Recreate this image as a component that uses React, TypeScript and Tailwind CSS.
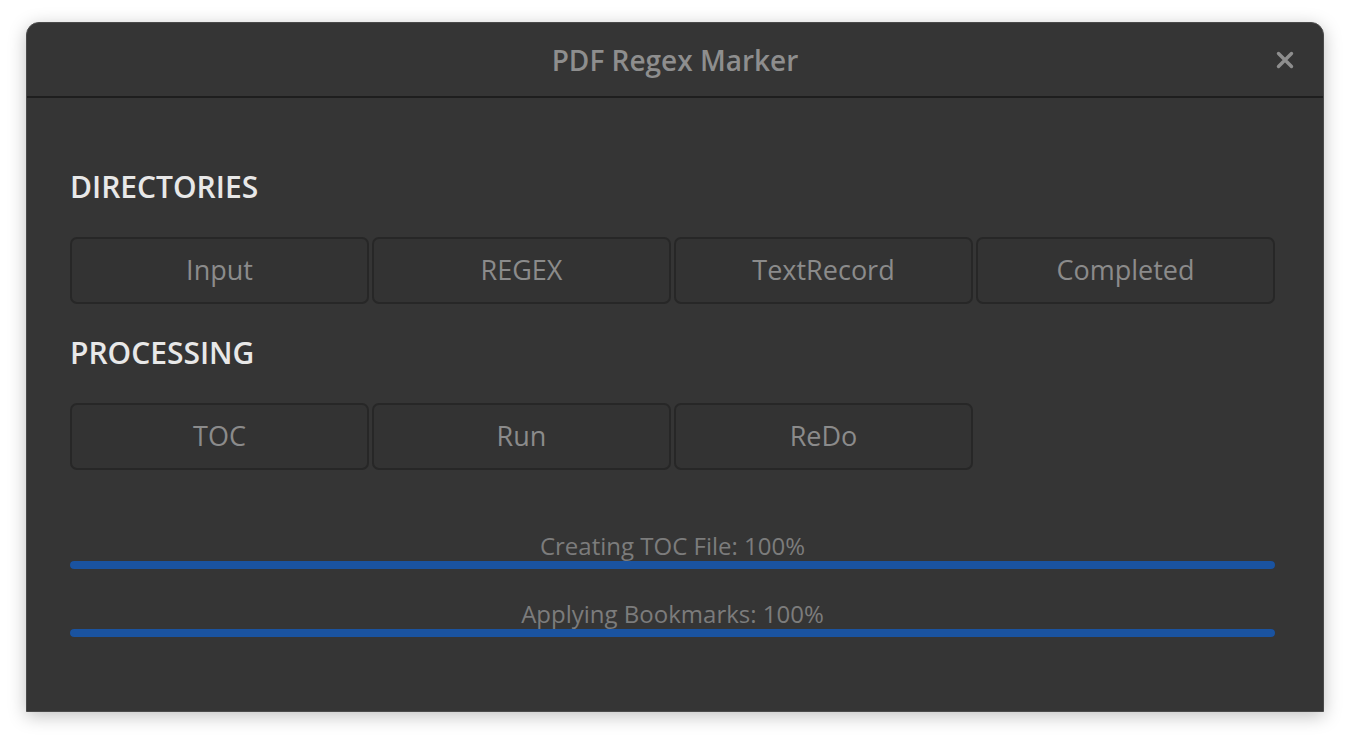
import React from 'react'

const dirButtons = ['Input', 'REGEX', 'TextRecord', 'Completed']
const procButtons = ['TOC', 'Run', 'ReDo']

const progress = [
	{label: 'Creating TOC File', value: 100},
	{label: 'Applying Bookmarks', value: 100},
]

const Btn = ({text}: {text: string}) => (
	<button className="h-[67px] rounded-[7px] border-2 border-[#272727] bg-[#333333] text-[27px] text-[#8b8b8b]">
		{text}
	</button>
)

const App = () => {
	return (
		<div className="min-h-screen bg-white pl-[26px] pt-[22px]" style={{fontFamily: '"Open Sans", "Noto Sans", sans-serif'}}>
			<div className="flex h-[690px] w-[1298px] flex-col rounded-t-[13px] border border-[#4a4a4a] bg-[#353535] shadow-[0_4px_18px_rgba(0,0,0,0.25)]">
				{/* header */}
				<div className="relative flex h-[75px] items-center justify-center border-b-2 border-[#1e1e1e]">
					<h1 className="text-[28px] font-semibold text-[#8e8e8e]">PDF Regex Marker</h1>
					<span className="absolute right-[28px] top-[27px] text-[#8e8e8e]">
						<svg width="20" height="20" viewBox="0 0 20 20">
							<path d="M3.5 3.5 L16.5 16.5 M16.5 3.5 L3.5 16.5" stroke="currentColor" strokeWidth="3.4" strokeLinecap="round"/>
						</svg>
					</span>
				</div>

				<div className="flex flex-col pl-[43px] pr-[48px] pt-[71px]">
					<h2 className="text-[30px] font-semibold leading-[36px] text-[#e8e8e8]">DIRECTORIES</h2>
					<div className="mt-[32px] grid grid-cols-4 gap-[3px]">
						{dirButtons.map(b => <Btn key={b} text={b}/>)}
					</div>

					<h2 className="mt-[31px] text-[30px] font-semibold leading-[36px] text-[#e8e8e8]">PROCESSING</h2>
					<div className="mt-[32px] grid grid-cols-4 gap-[3px]">
						{procButtons.map(b => <Btn key={b} text={b}/>)}
					</div>

					<div className="mt-[61px] flex flex-col gap-[30px]">
						{progress.map(p => (
							<div key={p.label} className="flex flex-col">
								<p className="text-center text-[24px] leading-[30px] text-[#7c7c7c]">{p.label}: {p.value}%</p>
								<div className="h-[8px] w-full rounded-full bg-[#2a2a2a]">
									<div className="h-full rounded-full bg-[#1a53a0]" style={{width: `${p.value}%`}}/>
								</div>
							</div>
						))}
					</div>
				</div>
			</div>
		</div>
	)
}

export default App
